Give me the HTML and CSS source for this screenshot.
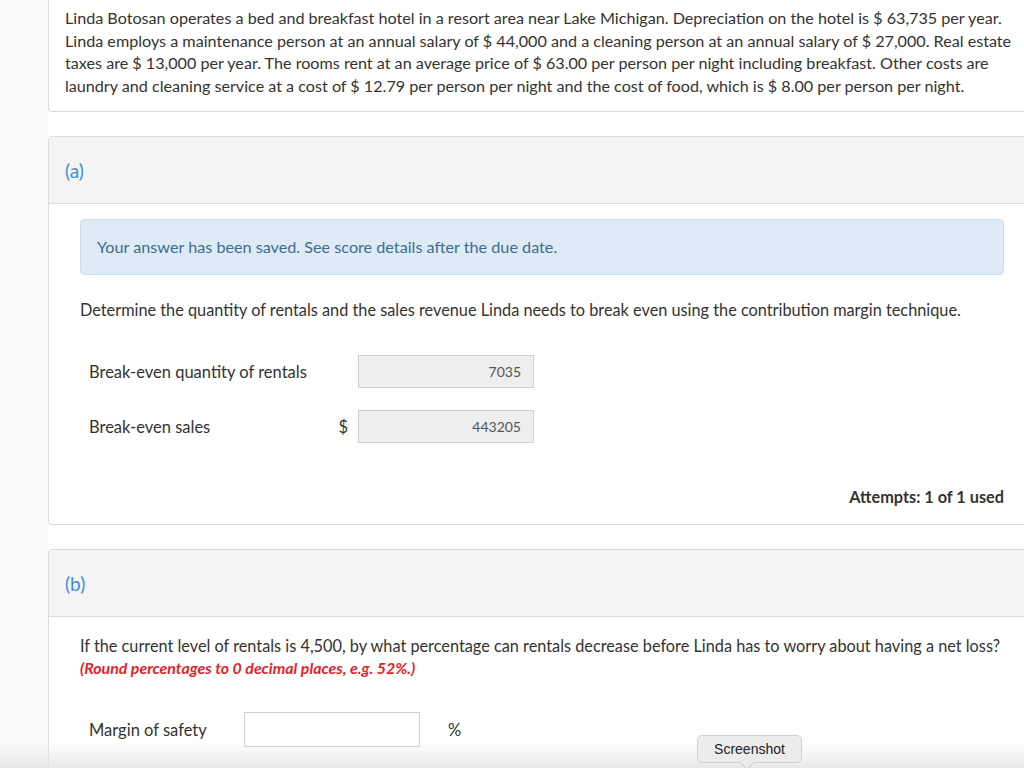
FILE: index.html
```html
<!DOCTYPE html>
<html lang="en">
<head>
    <meta charset="UTF-8">
    <title>Break-even analysis</title>
    <link rel="stylesheet" href="styles.css">
</head>
<body>
<div class="page">
    <div class="rail"></div>
    <div class="main">
        <div class="card intro">
            <p>Linda Botosan operates a bed and breakfast hotel in a resort area near Lake Michigan. Depreciation on the hotel is $ 63,735 per year.<br>
            Linda employs a maintenance person at an annual salary of $ 44,000 and a cleaning person at an annual salary of $ 27,000. Real estate<br>
            taxes are $ 13,000 per year. The rooms rent at an average price of $ 63.00 per person per night including breakfast. Other costs are<br>
            laundry and cleaning service at a cost of $ 12.79 per person per night and the cost of food, which is $ 8.00 per person per night.</p>
        </div>

        <div class="card part">
            <div class="part-head">(a)</div>
            <div class="part-body">
                <div class="notice">Your answer has been saved. See score details after the due date.</div>
                <p class="question">Determine the quantity of rentals and the sales revenue Linda needs to break even using the contribution margin technique.</p>
                <div class="answers">
                    <div class="row">
                        <span class="label">Break-even quantity of rentals</span>
                        <span class="unit"></span>
                        <input class="field locked" type="text" value="7035" readonly>
                    </div>
                    <div class="row">
                        <span class="label">Break-even sales</span>
                        <span class="unit">$</span>
                        <input class="field locked" type="text" value="443205" readonly>
                    </div>
                </div>
                <div class="attempts">Attempts: 1 of 1 used</div>
            </div>
        </div>

        <div class="card part">
            <div class="part-head">(b)</div>
            <div class="part-body">
                <p class="question tight">If the current level of rentals is 4,500, by what percentage can rentals decrease before Linda has to worry about having a net loss?</p>
                <p class="hint">(Round percentages to 0 decimal places, e.g. 52%.)</p>
                <div class="row safety">
                    <span class="label">Margin of safety</span>
                    <input class="field" type="text" value="">
                    <span class="pct">%</span>
                </div>
            </div>
        </div>
    </div>
</div>

<div class="fade"></div>
<div class="tip">Screenshot</div>
</body>
</html>
```

FILE: styles.css
```css
*{
    margin: 0;
    padding: 0;
    box-sizing: border-box;
}
html, body{
    height: 100%;
    overflow: hidden;
}
body{
    font-family: Lato, "Open Sans", sans-serif;
    font-size: 16px;
    color: #333;
    background: #fff;
}
.page{
    display: flex;
    min-height: 100%;
}
.rail{
    width: 48px;
    flex-shrink: 0;
    background: #f9f9f9;
}
.main{
    flex: 1;
    min-width: 0;
    display: flex;
    flex-direction: column;
    gap: 24px;
}
.card{
    border: 1px solid #dcdcdc;
    border-right: none;
    background: #fff;
}
.intro{
    border-top: none;
    border-radius: 0 0 0 4px;
    padding: 7px 0 14px 16px;
    font-size: 16.15px;
    line-height: 22.5px;
    white-space: nowrap;
}
.part{
    border-radius: 4px 0 0 4px;
}
.part-head{
    height: 67px;
    display: flex;
    align-items: center;
    padding: 0 16px;
    font-size: 19px;
    color: #3a8fdc;
    background: #f4f4f4;
    border-bottom: 1px solid #dcdcdc;
}
.part-body{
    padding: 15px 20px 16px 31px;
}
.notice{
    background: #deebf6;
    border: 1px solid #c6e2ee;
    border-radius: 4px;
    padding: 16px 16px 17px;
    font-size: 16.2px;
    line-height: 21px;
    color: #3c6c93;
}
.question{
    margin-top: 24px;
    font-size: 16.3px;
    line-height: 22px;
}
.question.tight{
    margin-top: 3px;
}
.hint{
    color: #e3232a;
    font-weight: bold;
    font-style: italic;
    font-size: 15.9px;
    line-height: 22px;
}
.answers{
    margin-top: 34px;
    display: flex;
    flex-direction: column;
    gap: 22px;
}
.row{
    display: flex;
    align-items: center;
    padding-left: 9px;
    font-size: 16.5px;
}
.label{
    width: 245px;
}
.unit{
    width: 24px;
    padding-right: 10px;
    text-align: right;
}
.field{
    width: 176px;
    height: 33px;
    border: 1px solid #cfcfcf;
    background: #fff;
    font-family: Lato, sans-serif;
    font-size: 14px;
    color: #555;
    padding: 0 12px;
    text-align: right;
    outline: none;
}
.field.locked{
    background: #eee;
}
.attempts{
    margin-top: 43px;
    text-align: right;
    font-weight: bold;
    font-size: 16.3px;
    line-height: 22px;
}
.safety{
    margin-top: 33px;
    padding-bottom: 40px;
}
.safety .label{
    width: 155px;
}
.safety .field{
    height: 35px;
}
.pct{
    margin-left: 28px;
}
.fade{
    position: fixed;
    left: 0;
    right: 0;
    bottom: 0;
    height: 26px;
    background: linear-gradient(rgba(235,235,235,0), rgba(230,230,230,0.9));
}
.tip{
    position: fixed;
    left: 697px;
    top: 735px;
    width: 105px;
    height: 28px;
    line-height: 26px;
    text-align: center;
    font-family: "Liberation Sans", Arial, sans-serif;
    font-size: 14px;
    color: #222;
    background: #ececec;
    border: 1px solid #cfcfcf;
    border-radius: 5px;
}
.tip::after{
    content: "";
    position: absolute;
    left: 44px;
    bottom: -6px;
    width: 9px;
    height: 9px;
    background: #ececec;
    border-right: 1px solid #cfcfcf;
    border-bottom: 1px solid #cfcfcf;
    transform: rotate(45deg);
}
```
